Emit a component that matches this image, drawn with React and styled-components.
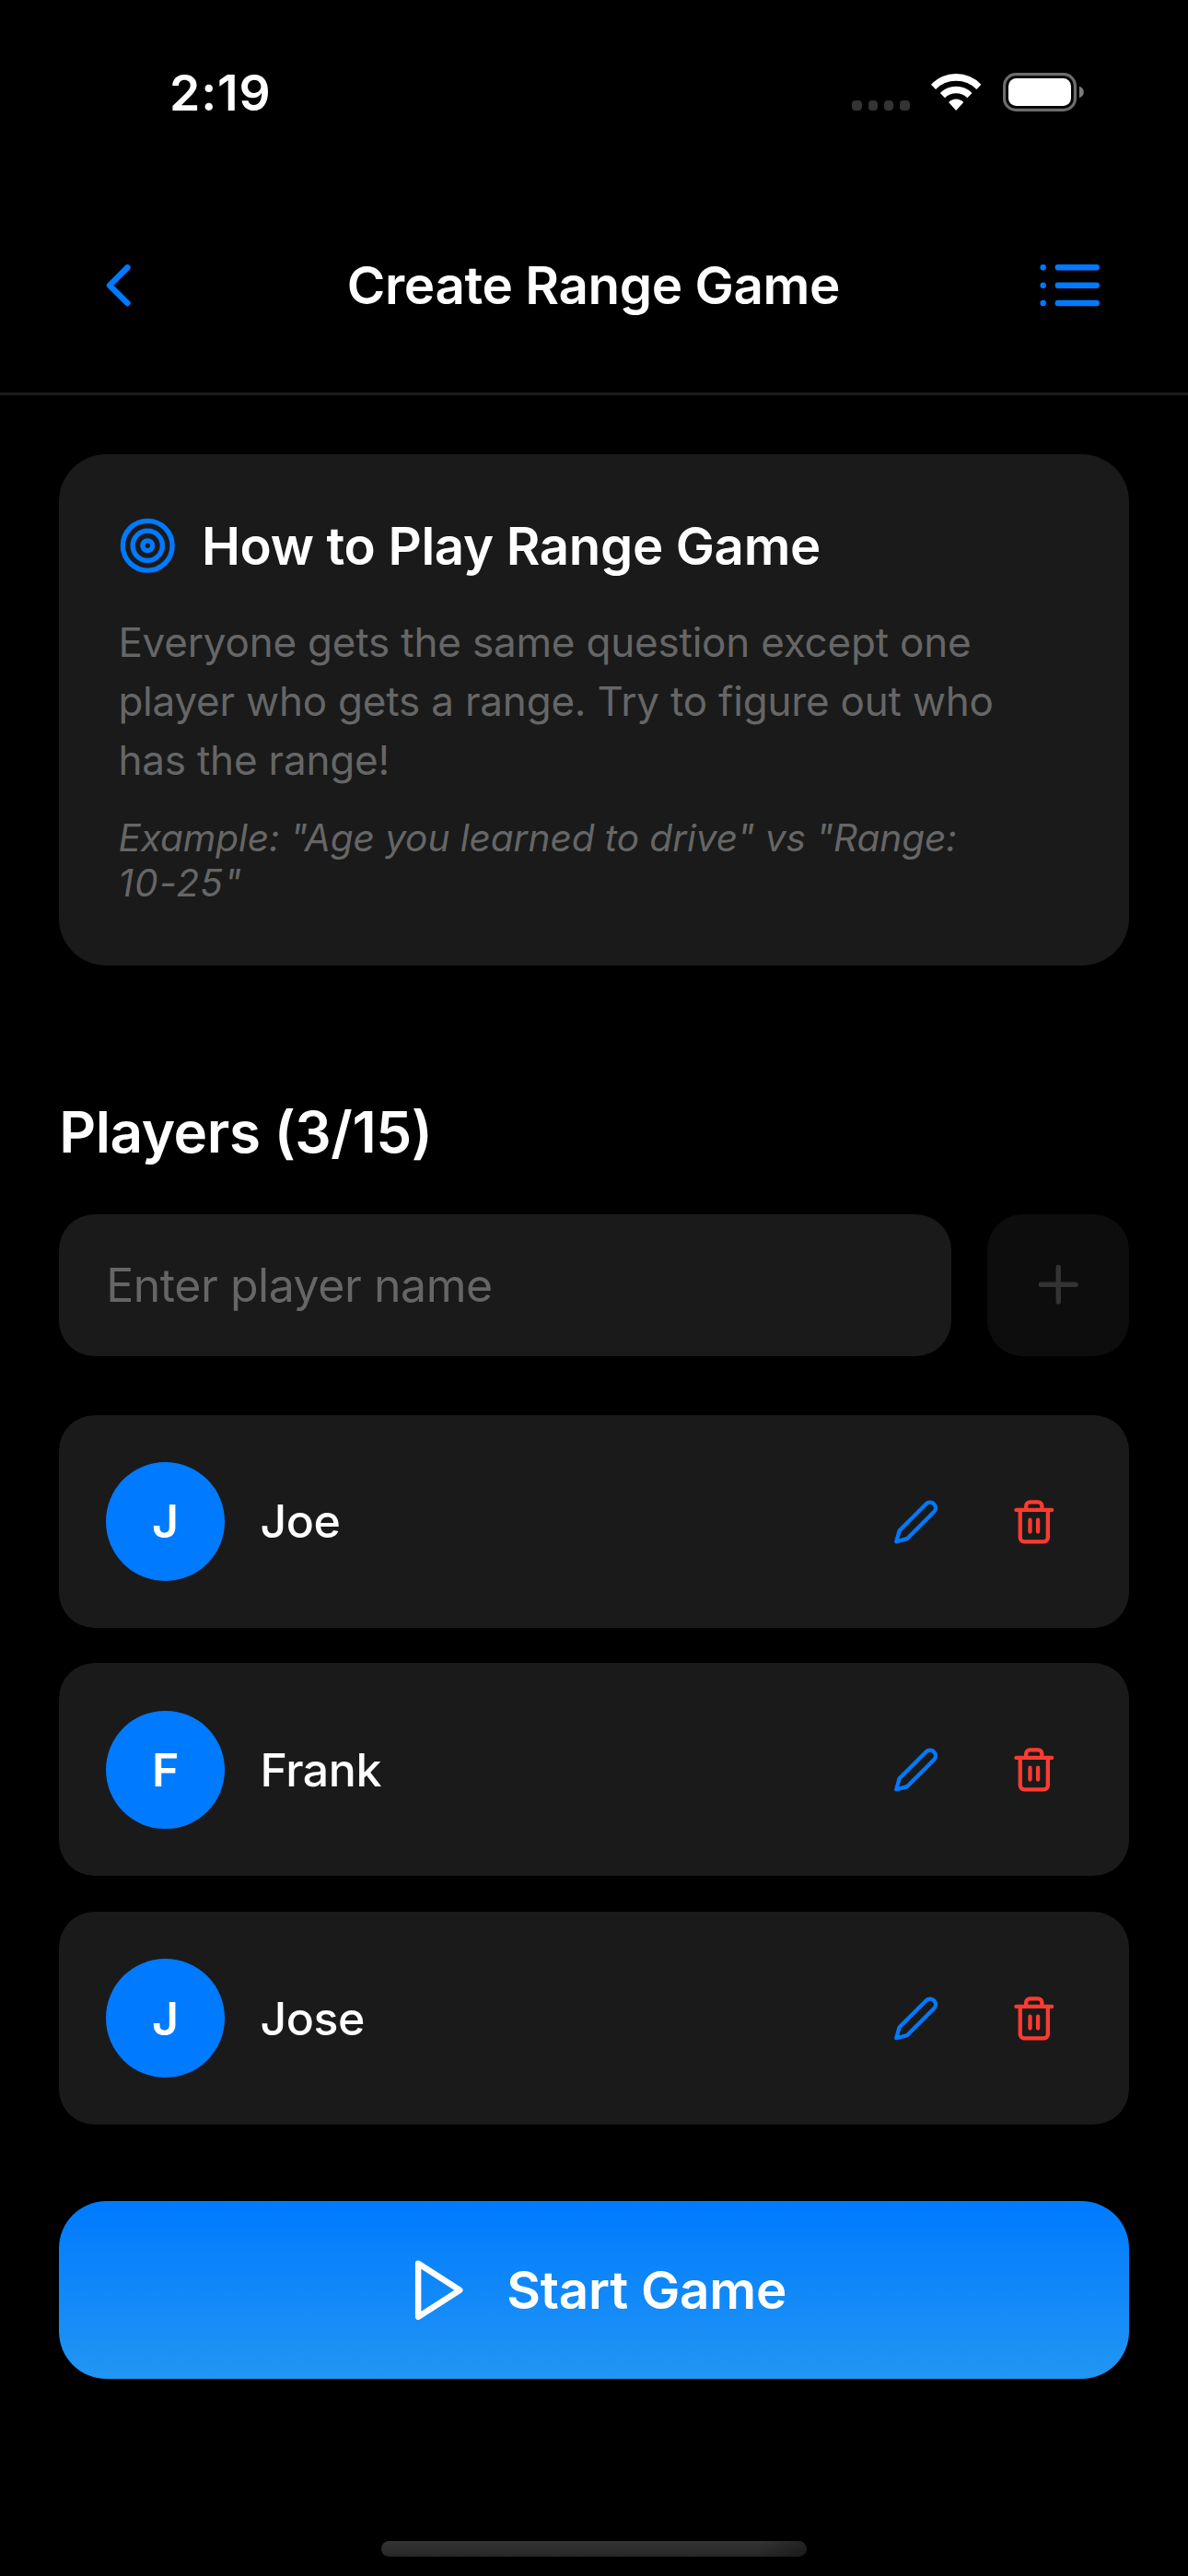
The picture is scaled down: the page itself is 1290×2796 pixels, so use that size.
import React from "react";
import styled, { createGlobalStyle, css } from "styled-components";

const color = {
  bg: "#000000",
  surface: "#1a1a1a",
  disabled: "#0d0d0d",
  blue: "#007aff",
  red: "#ff3b30",
  text: "#ffffff",
  muted: "#666666",
  faint: "#333333",
};

const GlobalStyle = createGlobalStyle`
  *, *::before, *::after { box-sizing: border-box; }
  body {
    margin: 0;
    background: ${color.bg};
    color: ${color.text};
    font-family: Inter, "Liberation Sans", sans-serif;
  }
  button { font-family: inherit; color: inherit; border: 0; padding: 0; background: none; }
  h1, h2, p, ul { margin: 0; padding: 0; }
  svg { display: block; flex: none; }
`;

const Screen = styled.div`
  display: flex;
  flex-direction: column;
  width: 1290px;
  height: 2796px;
  background: ${color.bg};
`;

const StatusBar = styled.div`
  display: flex;
  align-items: center;
  justify-content: space-between;
  height: 190px;
  padding: 10px 113px 0 184px;
`;

const Clock = styled.time`
  padding-top: 1px;
  font-size: 53.4px;
  font-weight: 600;
  line-height: 64px;
  letter-spacing: 0.9px;
`;

const StatusIcons = styled.div`
  display: flex;
  align-items: flex-end;
  height: 42px;
`;

const SignalDots = styled.div`
  display: flex;
  gap: 6.5px;
  margin: 0 23.5px 1px 0;
`;

const SignalDot = styled.span`
  width: 10.7px;
  height: 10.7px;
  border-radius: 4px;
  background: ${color.faint};
`;

const WifiGlyph = styled.svg`
  width: 54.4px;
  height: 40px;
  margin: 0 23.5px 1px 0;
`;

const Header = styled.header`
  display: flex;
  align-items: center;
  justify-content: space-between;
  height: 239px;
  padding: 4px 89.6px 0 90.4px;
  border-bottom: 3px solid ${color.surface};
`;

const Title = styled.h1`
  margin-left: -2px;
  font-size: 56.5px;
  font-weight: 600;
  line-height: 70px;
  letter-spacing: -0.4px;
`;

const IconButton = styled.button`
  display: flex;
  align-items: center;
  justify-content: center;
  padding: ${(p) => p.$pad || 0}px;
  color: ${(p) => p.$color || color.blue};
`;

const Content = styled.main`
  display: flex;
  flex-direction: column;
  padding: 64px 64.2px 0;
`;

const HelpCard = styled.section`
  padding: 64.5px 64.2px;
  border-radius: 51.6px;
  background: ${color.surface};
`;

const HelpHeading = styled.div`
  display: flex;
  align-items: center;
  gap: 26px;
  height: 70px;
  margin-bottom: 37.5px;
  color: ${color.blue};
`;

const HelpTitle = styled.h2`
  color: ${color.text};
  font-size: 56.3px;
  font-weight: 600;
  line-height: 70px;
  letter-spacing: -0.3px;
`;

const HelpText = styled.p`
  color: ${color.muted};
  font-size: 44px;
  line-height: 64.2px;
  letter-spacing: -0.2px;
  white-space: nowrap;
`;

const HelpExample = styled.p`
  margin-top: 27.4px;
  color: ${color.muted};
  font-size: 40.6px;
  font-style: italic;
  line-height: 49px;
  letter-spacing: -0.06px;
  white-space: nowrap;
`;

const Figures = styled.span`
  letter-spacing: 1.2px;
`;

const SectionTitle = styled.h2`
  margin: 142px 0 50px;
  font-size: 62px;
  font-weight: 600;
  line-height: 78px;
  letter-spacing: -0.45px;
`;

const AddRow = styled.div`
  display: flex;
  gap: 38.7px;
  height: 154px;
`;

const NameField = styled.div`
  display: flex;
  flex: 1;
  align-items: center;
  padding: 0 51px;
  border-radius: 38.7px;
  background: ${color.surface};
  color: ${color.muted};
  font-size: 50px;
  line-height: 62px;
  letter-spacing: -0.46px;
`;

const AddButton = styled.button`
  display: flex;
  align-items: center;
  justify-content: center;
  width: 154px;
  border-radius: 38.7px;
  background: ${color.disabled};
  color: ${color.faint};
`;

const PlayerList = styled.ul`
  display: flex;
  flex-direction: column;
  gap: 38.6px;
  margin-top: 64.4px;
  list-style: none;
`;

const PlayerRow = styled.li`
  display: flex;
  align-items: center;
  height: 231px;
  padding: 0 51px;
  border-radius: 38.7px;
  background: ${color.surface};
`;

const labelFont = css`
  font-size: 50px;
  line-height: 62px;
`;

const Avatar = styled.span`
  ${labelFont}
  display: flex;
  align-items: center;
  justify-content: center;
  width: 128.8px;
  height: 128.8px;
  border-radius: 50%;
  background: ${color.blue};
  font-weight: 600;
`;

const PlayerName = styled.span`
  ${labelFont}
  flex: 1;
  margin-left: 38.4px;
  font-weight: 500;
  letter-spacing: -0.4px;
`;

const RowActions = styled.div`
  display: flex;
  gap: 25.6px;
`;

const StartButton = styled.button`
  display: flex;
  align-items: center;
  justify-content: center;
  gap: 35px;
  height: 193px;
  margin-top: 83px;
  padding-left: 2px;
  border-radius: 51.6px;
  background: linear-gradient(180deg, ${color.blue} 0%, #2196f3 100%);
  font-size: 56.5px;
  font-weight: 600;
  line-height: 70px;
  letter-spacing: -0.2px;
`;

const HomeIndicator = styled.div`
  width: 462px;
  height: 17px;
  margin: auto auto 21px;
  border-radius: 8.5px;
  background: linear-gradient(105deg, transparent 88%, rgba(0, 0, 0, 0.35) 100%),
    linear-gradient(180deg, #343434, #272727);
`;

function StrokeIcon({ size, children }) {
  return (
    <svg
      width={size}
      height={size}
      viewBox="0 0 24 24"
      fill="none"
      stroke="currentColor"
      strokeWidth="2"
      strokeLinecap="round"
      strokeLinejoin="round"
    >
      {children}
    </svg>
  );
}

const BackIcon = () => (
  <StrokeIcon size={77.4}>
    <polyline points="15 18 9 12 15 6" />
  </StrokeIcon>
);

const ListIcon = () => (
  <StrokeIcon size={77.4}>
    <path d="M8 6h13M8 12h13M8 18h13M3 6h.01M3 12h.01M3 18h.01" />
  </StrokeIcon>
);

const TargetIcon = () => (
  <StrokeIcon size={64.5}>
    <circle cx="12" cy="12" r="10" />
    <circle cx="12" cy="12" r="6" />
    <circle cx="12" cy="12" r="2" />
  </StrokeIcon>
);

const PlusIcon = () => (
  <StrokeIcon size={64.5}>
    <path d="M12 5v14M5 12h14" />
  </StrokeIcon>
);

const PencilIcon = () => (
  <StrokeIcon size={51.6}>
    <path d="M17 3a2.828 2.828 0 1 1 4 4L7.5 20.5 2 22l1.5-5.5L17 3z" />
  </StrokeIcon>
);

const TrashIcon = () => (
  <StrokeIcon size={51.6}>
    <path d="M3 6h18" />
    <path d="M19 6v14a2 2 0 0 1-2 2H7a2 2 0 0 1-2-2V6" />
    <path d="M8 6V4a2 2 0 0 1 2-2h4a2 2 0 0 1 2 2v2" />
    <path d="M10 11v6M14 11v6" />
  </StrokeIcon>
);

const PlayIcon = () => (
  <StrokeIcon size={77.4}>
    <polygon points="5 3 19 12 5 21" />
  </StrokeIcon>
);

const WifiIcon = () => (
  <WifiGlyph viewBox="0 0 54.4 40" fill="#fff">
    <path d="M0 11.7A37.5 37.5 0 0 1 54.4 11.7L49.4 17A31.1 31.1 0 0 0 5 17Z" />
    <path d="M9.9 21A24.1 24.1 0 0 1 44.5 21L39.4 26.3A17.4 17.4 0 0 0 15 26.3Z" />
    <path d="M19.1 31A11 11 0 0 1 35.3 31L27.2 40Z" />
  </WifiGlyph>
);

const BatteryIcon = () => (
  <svg width="88" height="42" viewBox="0 0 88 42">
    <rect x="1.6" y="1.6" width="76.8" height="38.8" rx="12.5" fill="none" stroke="#6c6c6c" strokeWidth="3.2" />
    <rect x="6" y="6" width="68" height="30" rx="8.5" fill="#fff" />
    <path d="M83 14.8C86.2 16 87.8 18.3 87.8 21S86.2 26 83 27.2Z" fill="#7b7b7b" />
  </svg>
);

const players = ["Joe", "Frank", "Jose"];

export default function App() {
  return (
    <Screen>
      <GlobalStyle />
      <StatusBar>
        <Clock>2:19</Clock>
        <StatusIcons>
          <SignalDots>
            <SignalDot />
            <SignalDot />
            <SignalDot />
            <SignalDot />
          </SignalDots>
          <WifiIcon />
          <BatteryIcon />
        </StatusIcons>
      </StatusBar>

      <Header>
        <IconButton aria-label="Back">
          <BackIcon />
        </IconButton>
        <Title>Create Range Game</Title>
        <IconButton aria-label="Questions">
          <ListIcon />
        </IconButton>
      </Header>

      <Content>
        <HelpCard>
          <HelpHeading>
            <TargetIcon />
            <HelpTitle>How to Play Range Game</HelpTitle>
          </HelpHeading>
          <HelpText>
            Everyone gets the same question except one
            <br />
            player who gets a range. Try to figure out who
            <br />
            has the range!
          </HelpText>
          <HelpExample>
            Example: "Age you learned to drive" vs "Range:
            <br />
            <Figures>10-25"</Figures>
          </HelpExample>
        </HelpCard>

        <SectionTitle>Players ({players.length}/15)</SectionTitle>
        <AddRow>
          <NameField>Enter player name</NameField>
          <AddButton aria-label="Add player">
            <PlusIcon />
          </AddButton>
        </AddRow>

        <PlayerList>
          {players.map((name) => (
            <PlayerRow key={name}>
              <Avatar>{name[0]}</Avatar>
              <PlayerName>{name}</PlayerName>
              <RowActions>
                <IconButton $pad={25.8} aria-label={`Edit ${name}`}>
                  <PencilIcon />
                </IconButton>
                <IconButton $pad={25.8} $color={color.red} aria-label={`Remove ${name}`}>
                  <TrashIcon />
                </IconButton>
              </RowActions>
            </PlayerRow>
          ))}
        </PlayerList>

        <StartButton>
          <PlayIcon />
          Start Game
        </StartButton>
      </Content>

      <HomeIndicator />
    </Screen>
  );
}
